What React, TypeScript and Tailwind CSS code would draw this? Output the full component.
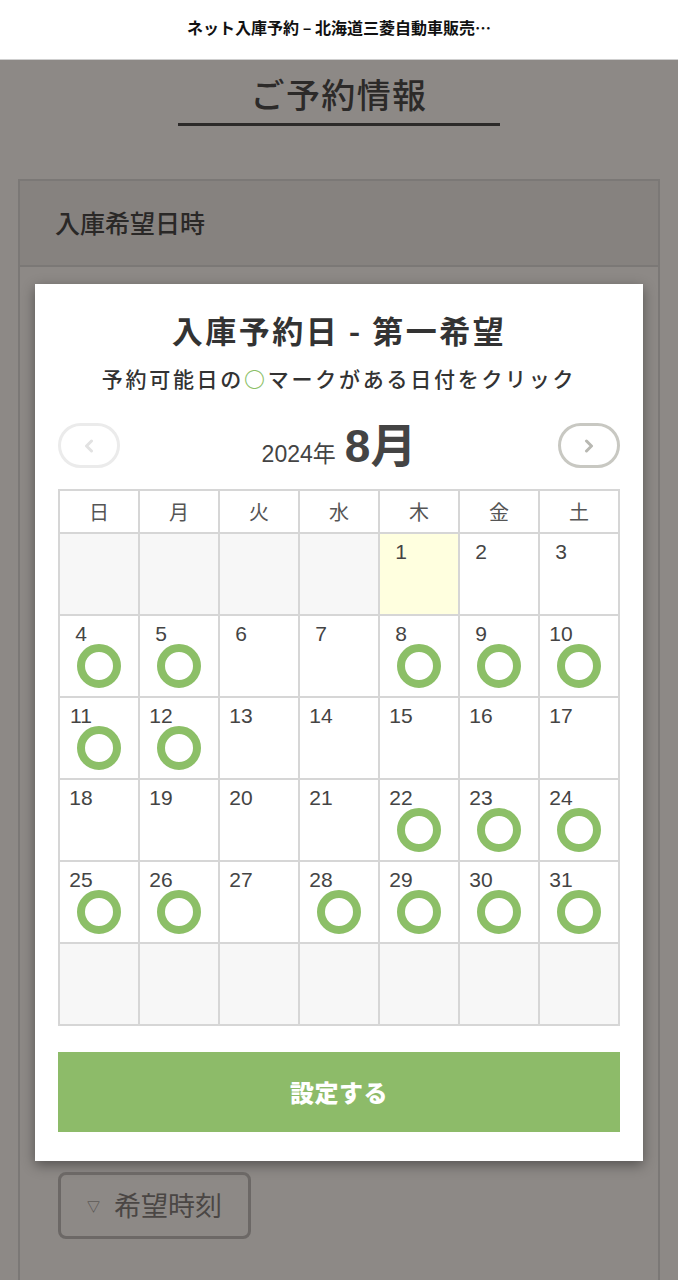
import React from "react";

const JP = '"Noto Sans CJK JP", "Noto Sans", sans-serif';
const NUM = '"Liberation Sans", "Noto Sans CJK JP", sans-serif';

const weekdays = ["日", "月", "火", "水", "木", "金", "土"];
const available = [4, 5, 8, 9, 10, 11, 12, 22, 23, 24, 25, 26, 28, 29, 30, 31];

// Aug 2024 starts on Thursday
const cells: (number | null)[] = Array.from({ length: 42 }, (_, i) => {
  const d = i - 3;
  return d >= 1 && d <= 31 ? d : null;
});

function Chevron({ dir, color }: { dir: "left" | "right"; color: string }) {
  return (
    <svg width="10" height="14" viewBox="0 0 10 14" fill="none">
      <path
        d={dir === "left" ? "M7.5 2 L2.5 7 L7.5 12" : "M2.5 2 L7.5 7 L2.5 12"}
        stroke={color}
        strokeWidth="3"
        strokeLinecap="round"
        strokeLinejoin="round"
      />
    </svg>
  );
}

function DayCell({ day }: { day: number | null }) {
  if (day === null) {
    return <div className="h-[82px] bg-[#f7f7f7] border-r-2 border-b-2 border-[#d6d6d6]" />;
  }
  const today = day === 1;
  return (
    <div
      className={`h-[82px] border-r-2 border-b-2 border-[#d6d6d6] flex flex-col ${
        today ? "bg-[#ffffdf]" : "bg-white"
      }`}
    >
      <span
        className="block w-[42px] text-center mt-[5px] text-[21px] leading-[26px] text-[#444]"
        style={{ fontFamily: NUM }}
      >
        {day}
      </span>
      {available.includes(day) && (
        <div className="mx-auto mt-[-3px] w-[44px] h-[44px] rounded-full border-[8px] border-[#8cbf67]" />
      )}
    </div>
  );
}

export default function App() {
  return (
    <div
      className="w-[678px] h-[1280px] overflow-hidden bg-[#8d8986] flex flex-col"
      style={{ fontFamily: JP }}
    >
      <div className="h-[60px] shrink-0 bg-white border-b border-[#cfcfcf] flex items-center justify-center">
        <span className="text-[16px] font-bold text-[#111] mb-[5px]">
          ネット入庫予約 – 北海道三菱自動車販売…
        </span>
      </div>

      <div className="flex flex-col items-center pt-[12px]">
        <h1 className="text-[34px] leading-[44px] font-medium tracking-[0.04em] text-[#2c2a29]">
          ご予約情報
        </h1>
        <div className="mt-[7px] w-[322px] h-[3px] bg-[#2c2a29]" />
      </div>

      <div className="mt-[53px] mx-[18px] flex-1 border-2 border-b-0 border-[#7b7876] flex flex-col">
        <div className="h-[86px] shrink-0 bg-[#86827f] border-b-2 border-[#7b7876] flex items-center pl-[35px]">
          <span className="text-[25px] font-medium text-[#2a2827]">入庫希望日時</span>
        </div>

        <div className="pt-[17px] pl-[15px]">
          <div className="w-[608px] h-[877px] bg-white shadow-[0_4px_12px_rgba(0,0,0,0.4)] px-[23px] pt-[26px] flex flex-col">
            <h2 className="text-center text-[31px] leading-[40px] font-bold tracking-[0.08em] text-[#333]">
              入庫予約日 - 第一希望
            </h2>
            <p className="mt-[14px] text-center text-[21px] leading-[28px] font-medium tracking-[0.13em] text-[#333]">
              予約可能日の<span className="text-[#8cbf67] font-light">〇</span>マークがある日付をクリック
            </p>

            <div className="mt-[31px] h-[45px] flex items-center justify-between">
              <button className="w-[62px] h-[45px] rounded-full border-[3px] border-[#ebebeb] flex items-center justify-center">
                <Chevron dir="left" color="#e2e2e2" />
              </button>
              <div className="flex items-baseline gap-[9px] text-[#444]" style={{ fontFamily: NUM }}>
                <span className="text-[23px]">
                  2024<span style={{ fontFamily: JP }}>年</span>
                </span>
                <span className="text-[46px] leading-[46px] font-bold">
                  8<span style={{ fontFamily: JP }}>月</span>
                </span>
              </div>
              <button className="w-[62px] h-[45px] rounded-full border-[3px] border-[#c8c8c2] flex items-center justify-center">
                <Chevron dir="right" color="#b8b8b2" />
              </button>
            </div>

            <div className="mt-[21px] grid grid-cols-7 border-l-2 border-t-2 border-[#d6d6d6]">
              {weekdays.map((w) => (
                <div
                  key={w}
                  className="h-[43px] border-r-2 border-b-2 border-[#d6d6d6] flex items-center justify-center text-[20px] text-[#555]"
                >
                  {w}
                </div>
              ))}
              {cells.map((d, i) => (
                <DayCell key={i} day={d} />
              ))}
            </div>

            <button className="mt-[26px] h-[80px] w-full bg-[#8dbb69] flex items-center justify-center">
              <span className="text-[24px] font-black text-white tracking-[0.02em]">設定する</span>
            </button>
          </div>

          <button className="mt-[11px] ml-[23px] w-[193px] h-[67px] rounded-lg border-[3px] border-[#6c6866] flex items-center pl-[26px] gap-[14px] text-[#4a4644]">
            <span className="text-[13px]">▽</span>
            <span className="text-[27px]">希望時刻</span>
          </button>
        </div>
      </div>
    </div>
  );
}
